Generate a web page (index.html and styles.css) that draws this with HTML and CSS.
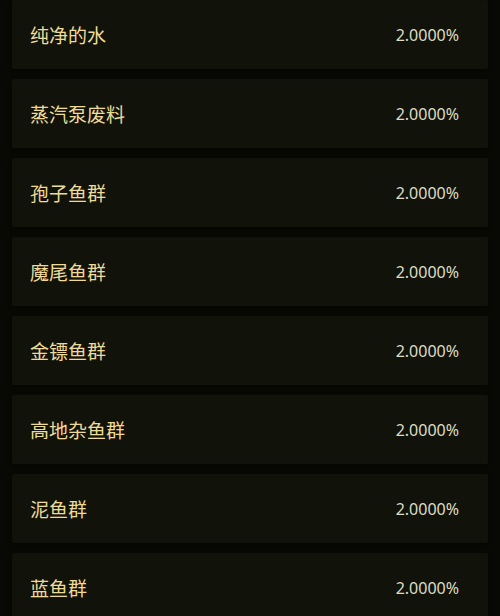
FILE: index.html
```html
<!DOCTYPE html>
<html lang="zh">
<head>
<meta charset="utf-8">
<link rel="stylesheet" href="styles.css">
</head>
<body>
<div class="list">
  <div class="row"><span class="name">纯净的水</span><span class="pct">2.0000%</span></div>
  <div class="row"><span class="name">蒸汽泵废料</span><span class="pct">2.0000%</span></div>
  <div class="row"><span class="name">孢子鱼群</span><span class="pct">2.0000%</span></div>
  <div class="row"><span class="name">魔尾鱼群</span><span class="pct">2.0000%</span></div>
  <div class="row"><span class="name">金镖鱼群</span><span class="pct">2.0000%</span></div>
  <div class="row"><span class="name">高地杂鱼群</span><span class="pct">2.0000%</span></div>
  <div class="row"><span class="name">泥鱼群</span><span class="pct">2.0000%</span></div>
  <div class="row"><span class="name">蓝鱼群</span><span class="pct">2.0000%</span></div>
</div>
</body>
</html>
```
FILE: styles.css
```css
html, body {
  margin: 0;
  padding: 0;
  background: #080904;
  height: 616px;
  overflow: hidden;
}
.list {
  display: flex;
  flex-direction: column;
  gap: 10px;
  padding: 0 12px;
}
.row {
  height: 69px;
  flex: none;
  display: flex;
  align-items: center;
  justify-content: space-between;
  padding: 0 29px 0 18px;
  background: #11130a;
  border-radius: 2px;
  box-shadow: 0 2px 4px rgba(0,0,0,0.35);
}
.name {
  font-family: "Noto Sans CJK SC", "Noto Sans", sans-serif;
  font-size: 19px;
  color: #eedb98;
}
.pct {
  font-family: "Noto Sans", "Open Sans", sans-serif;
  font-size: 16px;
  color: #dedcc4;
}
```
